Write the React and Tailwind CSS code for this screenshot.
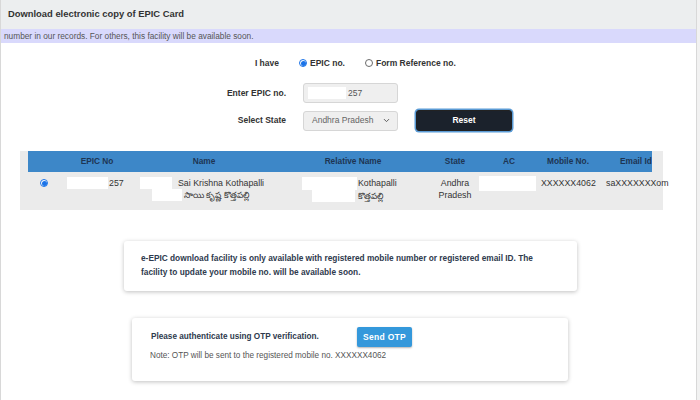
import { ChevronDown } from 'lucide-react'

const HEAD = [
  { label: 'EPIC No', cls: 'text-center' },
  { label: 'Name', cls: 'text-center' },
  { label: 'Relative Name', cls: 'text-center' },
  { label: 'State', cls: 'text-center' },
  { label: 'AC', cls: 'text-center' },
  { label: 'Mobile No.', cls: 'text-center' },
  { label: 'Email Id', cls: 'text-left pl-[24px]' },
]

const COLS = 'grid grid-cols-[32px_74px_140px_158px_46px_62px_56px_56px]'

function Radio({ checked }) {
  return checked ? (
    <span className="w-[8px] h-[8px] rounded-full border border-[#1a73e8] bg-white flex items-center justify-center shrink-0">
      <span className="w-[5px] h-[5px] rounded-full bg-[#1a73e8]" />
    </span>
  ) : (
    <span className="w-[8px] h-[8px] rounded-full border border-[#6b6b6b] bg-white shrink-0" />
  )
}

// white blocks that hide personal data in the screenshot
function Mask({ w, h = 12 }) {
  return <span className="bg-white shrink-0 inline-block" style={{ width: w, height: h }} />
}

export default function App() {
  return (
    <div className="min-h-screen bg-[#f2f2f2] font-['Liberation_Sans',Arial,sans-serif]">
      <div className="w-[697px] h-[400px] bg-white border-l border-r border-[#d8d8d8] flex flex-col overflow-hidden">
        <div className="h-[29px] bg-[#eceeef] flex items-center pl-[7px] text-[9.4px] font-bold text-[#333]">
          Download electronic copy of EPIC Card
        </div>
        <div className="h-[14px] bg-[#d9d9fc] flex items-center pl-[3px] text-[8.3px] text-[#555]">
          number in our records. For others, this facility will be available soon.
        </div>

        {/* form */}
        <div className="flex flex-col pt-[12px] text-[8.5px] font-bold text-[#333]">
          <div className="flex items-center h-[16px]">
            <div className="w-[285px] text-right pr-[7px]">I have</div>
            <div className="flex items-center ml-[13px] gap-[3px]">
              <Radio checked />
              <span>EPIC no.</span>
            </div>
            <div className="flex items-center ml-[20px] gap-[3px]">
              <Radio />
              <span>Form Reference no.</span>
            </div>
          </div>
          <div className="flex items-center mt-[12px]">
            <div className="w-[285px] text-right">Enter EPIC no.</div>
            <div className="ml-[17px] w-[95px] h-[20px] bg-[#efefef] border border-[#d6d6d6] rounded-[3px] flex items-center pl-[4px] gap-[2px] font-normal text-[#555]">
              <Mask w={38} h={12} />
              <span>257</span>
            </div>
          </div>
          <div className="flex items-center mt-[7px]">
            <div className="w-[285px] text-right">Select State</div>
            <div className="ml-[17px] w-[95px] h-[20px] bg-[#efefef] border border-[#d6d6d6] rounded-[3px] flex items-center pl-[8px] pr-[6px] justify-between font-normal text-[#666]">
              <span>Andhra Pradesh</span>
              <ChevronDown size={9} strokeWidth={2.5} className="text-[#555]" />
            </div>
            <button className="ml-[18px] w-[96px] h-[21px] bg-[#1b222c] border border-[#222] rounded-[3px] ring-[1.5px] ring-[#5b9bd5] text-white font-bold text-[8.5px]">
              Reset
            </button>
          </div>
        </div>

        {/* result table */}
        <div className="ml-[19px] mt-[20px] w-[643px] h-[59px] bg-[#ebebeb] pl-[8px]">
          <div className={`${COLS} w-[624px] h-[21px] bg-[#3d87c8] items-center text-[8.3px] font-bold text-[#1d3553]`}>
            <div />
            {HEAD.map((h) => (
              <div key={h.label} className={`${h.cls} whitespace-nowrap`}>{h.label}</div>
            ))}
          </div>
          <div className={`${COLS} w-[624px] pt-[5px] text-[8.8px] leading-[12px] text-[#333]`}>
            <div className="flex justify-center pt-[2px]">
              <Radio checked />
            </div>
            <div className="flex items-start pl-[7px] gap-[1px]">
              <Mask w={41} />
              <span>257</span>
            </div>
            <div className="flex flex-col">
              <div className="flex items-start pl-[6px] gap-[6px] whitespace-nowrap">
                <Mask w={32} />
                <span>Sai Krishna Kothapalli</span>
              </div>
              <div className="flex items-start pl-[18px] gap-[2px] whitespace-nowrap">
                <Mask w={30} />
                <span>సాయి కృష్ణ కొత్తపల్లి</span>
              </div>
            </div>
            <div className="flex flex-col">
              <div className="flex items-start pl-[28px] gap-[1px] whitespace-nowrap">
                <Mask w={55} h={13} />
                <span>Kothapalli</span>
              </div>
              <div className="flex items-start pl-[38px] gap-[3px] whitespace-nowrap">
                <Mask w={43} />
                <span>కొత్తపల్లి</span>
              </div>
            </div>
            <div className="text-center">
              Andhra
              <br />
              Pradesh
            </div>
            <div className="pl-[1px] -mt-[1px]">
              <Mask w={57} h={15} />
            </div>
            <div className="pl-[1px] whitespace-nowrap">XXXXXX4062</div>
            <div className="pl-[10px] whitespace-nowrap">saXXXXXXXom</div>
          </div>
        </div>

        {/* notice */}
        <div className="ml-[123px] mt-[31px] w-[453px] h-[50px] bg-white rounded-[3px] shadow-[0_1px_4px_rgba(0,0,0,0.25)] pl-[17px] pt-[10px] text-[8.3px] leading-[14px] font-bold text-[#2e3a4d]">
          e-EPIC download facility is only available with registered mobile number or registered email ID. The
          <br />
          facility to update your mobile no. will be available soon.
        </div>

        {/* otp */}
        <div className="ml-[131px] mt-[27px] w-[436px] h-[63px] bg-white rounded-[3px] shadow-[0_1px_4px_rgba(0,0,0,0.25)] pl-[19px] pt-[9px] text-[8.2px]">
          <div className="flex items-center">
            <span className="w-[206px] font-bold text-[#2e3a4d]">Please authenticate using OTP verification.</span>
            <button className="w-[55px] h-[20px] bg-[#3498db] rounded-[2px] shadow-[0_1px_2px_rgba(0,0,0,0.3)] text-white font-bold text-[8.5px] tracking-[0.3px]">
              Send OTP
            </button>
          </div>
          <div className="mt-[3px] -ml-[1px] text-[#555]">Note: OTP will be sent to the registered mobile no. XXXXXX4062</div>
        </div>
      </div>
    </div>
  )
}
